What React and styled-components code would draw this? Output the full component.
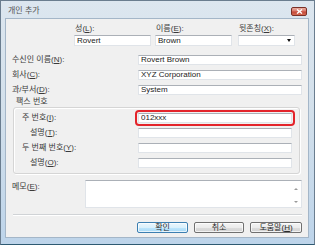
import React from 'react';
import styled, { createGlobalStyle } from 'styled-components';

const GlobalStyle = createGlobalStyle`
  html, body {
    margin: 0;
    padding: 0;
    background: #ffffff;
  }
  body{
    font-family: "Liberation Sans", "Noto Sans CJK KR", sans-serif;
  }
`

const Window = styled.div`
  box-sizing: border-box;
  width: 315px;
  height: 245px;
  display: flex;
  flex-direction: column;
  border: 1px solid #6a7d8f;
  border-bottom-color: #2e5a72;
  background: linear-gradient(180deg, #dce6ef 0%, #d3e0eb 45%, #bdd4ea 100%);
  font-family: "Liberation Sans", "Noto Sans CJK KR", sans-serif;
  font-size: 8px;
  color: #3a3a3a;
`

const TitleBar = styled.div`
  height: 17px;
  display: flex;
  align-items: flex-start;
  padding: 0 7px;
`

const Title = styled.div`
  margin-top: 5px;
  line-height: 10px;
  color: #555555;
`

const CloseButton = styled.div`
  box-sizing: border-box;
  margin-left: auto;
  margin-top: 6px;
  width: 16px;
  height: 9px;
  border: 1px solid #7a3027;
  border-radius: 2px;
  background: linear-gradient(180deg, #eab0a4 0%, #d9786a 45%, #c4483a 55%, #d46a52 100%);
  display: flex;
  align-items: center;
  justify-content: center;
`

const Body = styled.div`
  box-sizing: border-box;
  height: 220px;
  margin: 0 5px 6px 4px;
  border: 1px solid #a4b6c8;
  background: #f0f0f0;
  padding: 4px 6px;
  display: flex;
  flex-direction: column;
`

const NameRow = styled.div`
  display: flex;
  margin-left: 62px;
`

const NameField = styled.div`
  width: ${p => p.$width}px;
  margin-left: ${p => p.$offset || 0}px;
  display: flex;
  flex-direction: column;
`

const FieldLabel = styled.label`
  height: 12px;
  line-height: 12px;
  padding-left: 1px;
  white-space: nowrap;
`

const Input = styled.input`
  box-sizing: border-box;
  width: ${p => p.$width ? `${p.$width}px` : '100%'};
  height: ${p => p.$height || 10}px;
  margin: 0;
  margin-left: ${p => p.$width ? 'auto' : '0'};
  padding: 0 2px;
  border: 1px solid #e0e4e9;
  border-top-color: #abb0b7;
  background: #ffffff;
  font-family: inherit;
  font-size: 8px;
  color: #222222;
  outline: none;
  ${p => p.$highlight && `
    outline: 2px solid #e3242b;
    outline-offset: 1px;
    border-radius: 1px;
  `}
`

const Combo = styled.div`
  box-sizing: border-box;
  height: 11px;
  background: #ffffff;
  border: 1px solid #e0e4e9;
  border-top-color: #abb0b7;
  display: flex;
  align-items: center;
  justify-content: flex-end;
  padding-right: 3px;
`

const ComboArrow = styled.span`
  width: 0;
  height: 0;
  border-left: 2.5px solid transparent;
  border-right: 2.5px solid transparent;
  border-top: 3px solid #111111;
`

const InfoList = styled.div`
  margin-top: 6px;
`

const InfoRow = styled.div`
  height: 15px;
  display: flex;
  align-items: center;
`

const RowLabel = styled.label`
  padding-left: ${p => p.$indent || 0}px;
  line-height: 10px;
  white-space: nowrap;
`

const Legend = styled.div`
  height: 10px;
  line-height: 10px;
  padding-left: 4px;
`

const FaxGroup = styled.div`
  box-sizing: border-box;
  height: 67px;
  margin: 0 2px 0 1px;
  padding: 2px 7px 0 8px;
  border: 1px solid #d5d5d5;
  border-radius: 3px;
  box-shadow: inset 1px 1px 0 #ffffff, 1px 1px 0 #ffffff;
`

const MemoRow = styled.div`
  margin-top: 6px;
  height: 28px;
  display: flex;
`

const MemoLabel = styled.label`
  margin-top: 2px;
  line-height: 10px;
`

const MemoBox = styled.div`
  box-sizing: border-box;
  width: 217px;
  height: 28px;
  margin-left: auto;
  background: #ffffff;
  border: 1px solid #e0e4e9;
  border-top-color: #abb0b7;
  display: flex;
  justify-content: flex-end;
`

const ScrollColumn = styled.div`
  width: 10px;
  display: flex;
  flex-direction: column;
  align-items: center;
  justify-content: space-between;
  padding: 7px 0 4px;
`

const ScrollArrow = styled.span`
  width: 0;
  height: 0;
  border-left: 2.5px solid transparent;
  border-right: 2.5px solid transparent;
  ${p => p.$up ? 'border-bottom: 2px solid #9a9a9a;' : 'border-top: 2px solid #9a9a9a;'}
`

const Separator = styled.div`
  margin: 6px 0 0 1px;
  border-top: 1px solid #d0d3d6;
  border-bottom: 1px solid #ffffff;
`

const ButtonRow = styled.div`
  margin-top: 6px;
  display: flex;
  justify-content: flex-end;
  gap: 6px;
`

const Button = styled.button`
  box-sizing: border-box;
  width: ${p => p.$width}px;
  height: 11px;
  margin: 0;
  padding: 0;
  border: 1px solid ${p => p.$primary ? '#3c7fb1' : '#707070'};
  border-radius: 2px;
  background: ${p => p.$primary
    ? 'linear-gradient(180deg, #eaf6fd 0%, #d9f0fc 50%, #bee6fd 51%, #a7d9f5 100%)'
    : 'linear-gradient(180deg, #f4f4f4 0%, #ebebeb 50%, #dddddd 51%, #d2d2d2 100%)'};
  box-shadow: inset 0 0 0 1px rgba(255, 255, 255, 0.7);
  font-family: inherit;
  font-size: 8px;
  line-height: 9px;
  color: #2a2a2a;
`

const Key = ({ k }) => <>(<u>{k}</u>):</>

const App = () => {
  return (
    <>
      <GlobalStyle />
      <Window>
        <TitleBar>
          <Title>개인 추가</Title>
          <CloseButton>
            <svg width="7" height="5" viewBox="0 0 7 5">
              <path d="M1 0.5 L6 4.5 M6 0.5 L1 4.5" stroke="#ffffff" strokeWidth="1.4" />
            </svg>
          </CloseButton>
        </TitleBar>
        <Body>
          <NameRow>
            <NameField $width={77}>
              <FieldLabel>성<Key k="L" /></FieldLabel>
              <Input $height={11} readOnly defaultValue="Rovert" />
            </NameField>
            <NameField $width={77} $offset={4}>
              <FieldLabel>이름<Key k="E" /></FieldLabel>
              <Input $height={11} readOnly defaultValue="Brown" />
            </NameField>
            <NameField $width={57} $offset={6}>
              <FieldLabel>뒷존칭<Key k="X" /></FieldLabel>
              <Combo><ComboArrow /></Combo>
            </NameField>
          </NameRow>

          <InfoList>
            <InfoRow>
              <RowLabel>수신인 이름<Key k="N" /></RowLabel>
              <Input $width={164} readOnly defaultValue="Rovert Brown" />
            </InfoRow>
            <InfoRow>
              <RowLabel>회사<Key k="C" /></RowLabel>
              <Input $width={164} readOnly defaultValue="XYZ Corporation" />
            </InfoRow>
            <InfoRow>
              <RowLabel>과/부서<Key k="D" /></RowLabel>
              <Input $width={164} readOnly defaultValue="System" />
            </InfoRow>
          </InfoList>

          <Legend>팩스 번호</Legend>
          <FaxGroup>
            <InfoRow>
              <RowLabel>주 번호<Key k="I" /></RowLabel>
              <Input $width={154} $highlight readOnly defaultValue="012xxx" />
            </InfoRow>
            <InfoRow>
              <RowLabel $indent={8}>설명<Key k="T" /></RowLabel>
              <Input $width={154} readOnly defaultValue="" />
            </InfoRow>
            <InfoRow>
              <RowLabel>두 번째 번호<Key k="Y" /></RowLabel>
              <Input $width={154} readOnly defaultValue="" />
            </InfoRow>
            <InfoRow>
              <RowLabel $indent={8}>설명<Key k="O" /></RowLabel>
              <Input $width={154} readOnly defaultValue="" />
            </InfoRow>
          </FaxGroup>

          <MemoRow>
            <MemoLabel>메모<Key k="E" /></MemoLabel>
            <MemoBox>
              <ScrollColumn>
                <ScrollArrow $up />
                <ScrollArrow />
              </ScrollColumn>
            </MemoBox>
          </MemoRow>

          <Separator />

          <ButtonRow>
            <Button $width={51} $primary>확인</Button>
            <Button $width={50}>취소</Button>
            <Button $width={52}>도움말(<u>H</u>)</Button>
          </ButtonRow>
        </Body>
      </Window>
    </>
  );
}
export default App;
